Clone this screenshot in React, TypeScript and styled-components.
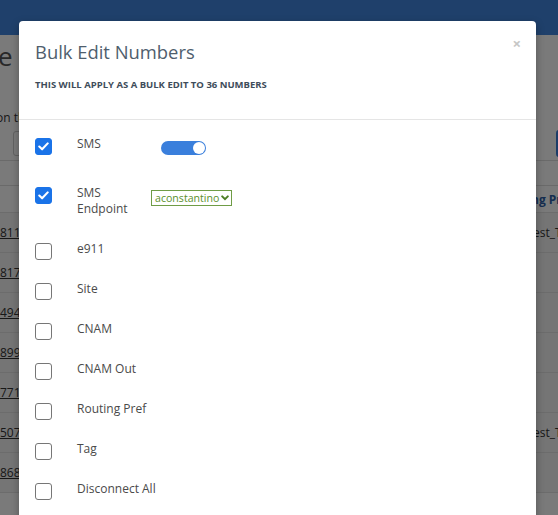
import React from 'react';
import styled, { createGlobalStyle } from 'styled-components';

const GlobalStyle = createGlobalStyle`
  html, body {
    margin: 0;
    padding: 0;
    background: #fff;
    font-family: "Open Sans", "Liberation Sans", sans-serif;
  }
  #root {
    width: 558px;
    height: 515px;
    overflow: hidden;
    position: relative;
  }
`;

// ---- page behind the dialog ----

const Page = styled.div`
  width: 558px;
  height: 515px;
  background: #fff;
  overflow: hidden;
`;

const TopBar = styled.div`
  height: 35px;
  background: #4187df;
`;

const PageTitle = styled.h1`
  margin: 0 0 0 -2px;
  padding-top: 3px;
  height: 41px;
  line-height: 36px;
  font-size: 26px;
  font-weight: 400;
  color: #555;
  white-space: nowrap;
`;

const Hint = styled.div`
  font-size: 12px;
  color: #333;
  height: 18px;
  line-height: 18px;
  margin-top: 30px;
  margin-left: -4px;
  white-space: nowrap;
`;

const FilterRow = styled.div`
  display: flex;
  justify-content: space-between;
  align-items: center;
  height: 34px;
  box-sizing: border-box;
  border-bottom: 1px solid #ddd;
`;

const FilterBox = styled.div`
  margin-left: 13px;
  width: 120px;
  height: 25px;
  box-sizing: border-box;
  border: 1px solid #ccc;
  border-radius: 3px;
  font-size: 13px;
  color: #333;
  padding-left: 10px;
  line-height: 23px;
`;

const BlueButton = styled.div`
  width: 40px;
  height: 27px;
  margin-right: -38px;
  background: #3b7ed8;
  border-radius: 3px;
`;

const Spacer = styled.div`
  height: 25px;
  box-sizing: border-box;
  border-bottom: 1px solid #ddd;
`;

const TableRow = styled.div<{ $head?: boolean }>`
  display: grid;
  grid-template-columns: 537px 1fr;
  height: ${(p) => (p.$head ? 27 : 40)}px;
  box-sizing: border-box;
  align-items: center;
  border-bottom: 1px solid #e2e2e2;
  background: ${(p) => (p.$head ? '#fff' : '#f4f4f4')};
  font-size: 12px;
  white-space: nowrap;
  overflow: hidden;
`;

const NumberLink = styled.span`
  color: #333;
  text-decoration: underline;
`;

const HeadCell = styled.span`
  color: #2c5fa8;
  font-weight: 700;
  margin-left: -6px;
`;

const Cell = styled.span`
  color: #333;
  margin-left: -4px;
`;

const Overlay = styled.div`
  position: absolute;
  inset: 0;
  background: rgba(0, 0, 0, 0.52);
`;

// ---- dialog ----

const Dialog = styled.div`
  position: absolute;
  top: 21px;
  left: 19px;
  width: 517px;
  height: 520px;
  background: #fff;
  border-radius: 4px;
  box-shadow: 0 3px 9px rgba(0, 0, 0, 0.3);
`;

const Header = styled.div`
  position: relative;
  padding: 16px 16px 0 16px;
  height: 82px;
  border-bottom: 1px solid #e5e5e5;
`;

const Title = styled.h2`
  margin: 0;
  font-size: 18.4px;
  font-weight: 400;
  color: #4f5e6d;
  line-height: 30px;
`;

const Subtitle = styled.div`
  margin-top: 11px;
  font-size: 9.5px;
  font-weight: 700;
  color: #3e4c5a;
`;

const Close = styled.span`
  position: absolute;
  top: 12px;
  right: 15px;
  font-size: 15px;
  font-weight: 700;
  color: #c6c6c6;
  line-height: 20px;
`;

const Body = styled.div`
  padding: 4px 16px 0 16px;
`;

const Row = styled.div`
  display: grid;
  grid-template-columns: 42px 74px 1fr;
  align-items: start;
  padding: 12px 0;
`;

const Check = styled.span<{ $on?: boolean }>`
  width: 17px;
  height: 17px;
  margin: 2px 0 -3px 0;
  box-sizing: border-box;
  border-radius: 3px;
  border: 1px solid ${(p) => (p.$on ? '#1a73e8' : '#767676')};
  background: ${(p) => (p.$on ? '#1a73e8' : '#fff')};
  display: flex;
  align-items: center;
  justify-content: center;
`;

const Label = styled.span<{ $wrap?: boolean }>`
  font-size: 12px;
  line-height: 16px;
  color: #4a4a4a;
  width: 68px;
  white-space: ${(p) => (p.$wrap ? 'normal' : 'nowrap')};
`;

const ToggleWrap = styled.div`
  padding: 5px 0 6px 10px;
`;

const Toggle = styled.span`
  display: flex;
  justify-content: flex-end;
  align-items: center;
  width: 45px;
  height: 14px;
  border-radius: 7px;
  background: #3a7fdc;
  padding: 0 1px;
  box-sizing: border-box;
`;

const Knob = styled.span`
  width: 12px;
  height: 12px;
  border-radius: 50%;
  background: #fff;
`;

const Select = styled.div`
  display: inline-flex;
  align-items: center;
  gap: 2px;
  height: 16px;
  box-sizing: border-box;
  border: 1px solid #6f9c46;
  padding: 0 2px 0 3px;
  font-size: 10.6px;
  color: #5b8f2c;
  line-height: 14px;
`;

const Tick = () => (
  <svg width="11" height="9" viewBox="0 0 11 9">
    <path d="M1.3 4.6 L4.1 7.3 L9.7 1.4" fill="none" stroke="#fff" strokeWidth="2.1" strokeLinecap="round" strokeLinejoin="round" />
  </svg>
);

const Chevron = () => (
  <svg width="8" height="6" viewBox="0 0 8 6">
    <path d="M1.2 1.4 L4 4.2 L6.8 1.4" fill="none" stroke="#4d7f26" strokeWidth="2" strokeLinecap="round" />
  </svg>
);

const numbers = ['8110', '8173', '4943', '8996', '7717', '5077', '8685'];
const tags = ['est_Tag', '', '', '', '', 'est_Tag', ''];
const fields = ['e911', 'Site', 'CNAM', 'CNAM Out', 'Routing Pref', 'Tag', 'Disconnect All'];

export default function App() {
  return (
    <>
      <GlobalStyle />
      <Page>
        <TopBar />
        <PageTitle>e Numbers</PageTitle>
        <Hint>on the</Hint>
        <FilterRow>
          <FilterBox>S</FilterBox>
          <BlueButton />
        </FilterRow>
        <Spacer />
        <TableRow $head>
          <span />
          <HeadCell>ng Pref</HeadCell>
        </TableRow>
        {numbers.map((n, i) => (
          <TableRow key={n}>
            <NumberLink>{n}234</NumberLink>
            <Cell>{tags[i]}</Cell>
          </TableRow>
        ))}
      </Page>
      <Overlay />
      <Dialog>
        <Header>
          <Title>Bulk Edit Numbers</Title>
          <Subtitle>THIS WILL APPLY AS A BULK EDIT TO 36 NUMBERS</Subtitle>
          <Close>×</Close>
        </Header>
        <Body>
          <Row>
            <Check $on>
              <Tick />
            </Check>
            <Label>SMS</Label>
            <ToggleWrap>
              <Toggle>
                <Knob />
              </Toggle>
            </ToggleWrap>
          </Row>
          <Row>
            <Check $on>
              <Tick />
            </Check>
            <Label $wrap>SMS Endpoint</Label>
            <div>
              <Select>
                aconstantino
                <Chevron />
              </Select>
            </div>
          </Row>
          {fields.map((f) => (
            <Row key={f}>
              <Check />
              <Label>{f}</Label>
            </Row>
          ))}
        </Body>
      </Dialog>
    </>
  );
}
